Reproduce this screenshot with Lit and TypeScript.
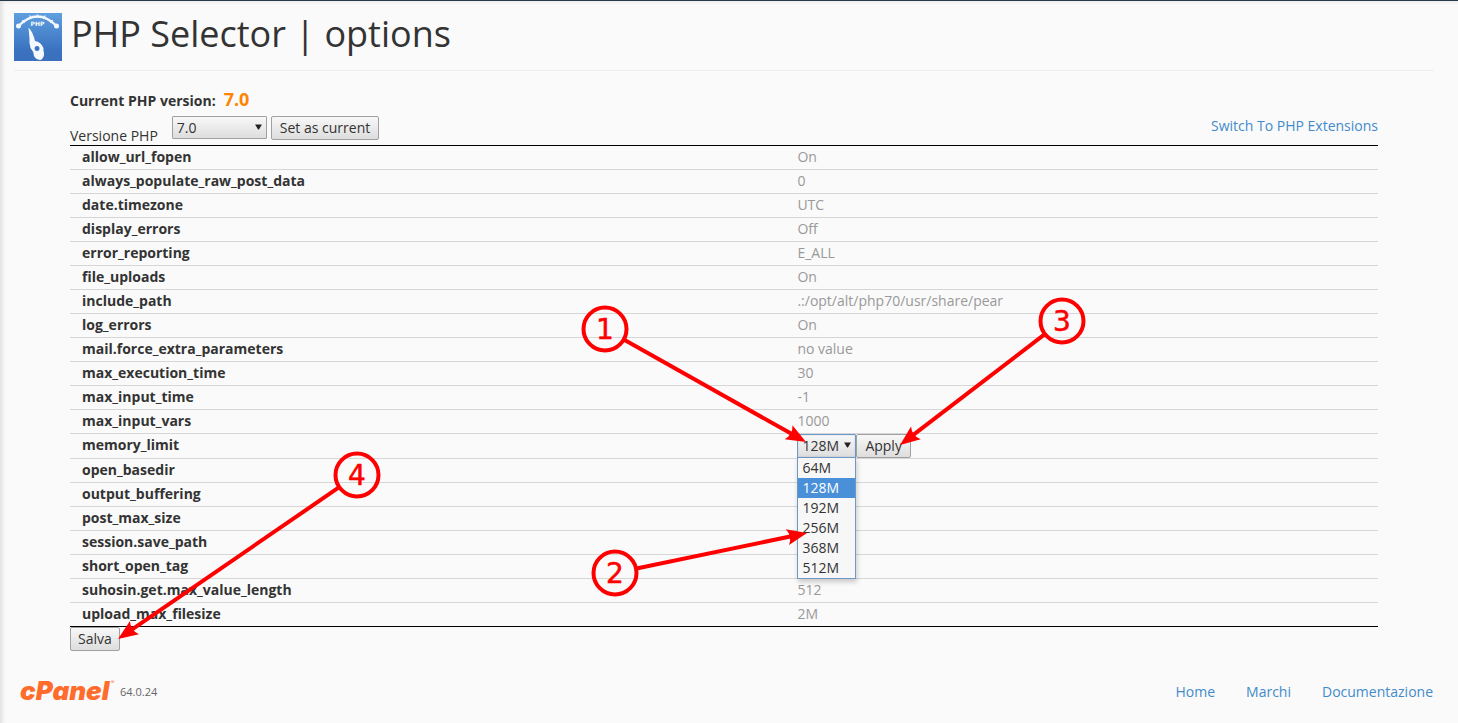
import { LitElement, html, svg, css } from "lit";
import { customElement, state } from "lit/decorators.js";

interface Option {
  name: string;
  value: string;
}

interface Callout {
  label: string;
  x: number;
  y: number;
  tipX: number;
  tipY: number;
}

const OPTIONS: Option[] = [
  { name: "allow_url_fopen", value: "On" },
  { name: "always_populate_raw_post_data", value: "0" },
  { name: "date.timezone", value: "UTC" },
  { name: "display_errors", value: "Off" },
  { name: "error_reporting", value: "E_ALL" },
  { name: "file_uploads", value: "On" },
  { name: "include_path", value: ".:/opt/alt/php70/usr/share/pear" },
  { name: "log_errors", value: "On" },
  { name: "mail.force_extra_parameters", value: "no value" },
  { name: "max_execution_time", value: "30" },
  { name: "max_input_time", value: "-1" },
  { name: "max_input_vars", value: "1000" },
  { name: "memory_limit", value: "128M" },
  { name: "open_basedir", value: "" },
  { name: "output_buffering", value: "" },
  { name: "post_max_size", value: "" },
  { name: "session.save_path", value: "" },
  { name: "short_open_tag", value: "" },
  { name: "suhosin.get.max_value_length", value: "512" },
  { name: "upload_max_filesize", value: "2M" },
];

const MEMORY = ["64M", "128M", "192M", "256M", "368M", "512M"];

const CALLOUTS: Callout[] = [
  { label: "1", x: 605, y: 329, tipX: 806, tipY: 442 },
  { label: "2", x: 615, y: 573, tipX: 807, tipY: 533 },
  { label: "3", x: 1062, y: 321, tipX: 900, tipY: 445 },
  { label: "4", x: 357, y: 475, tipX: 118, tipY: 639 },
];

@customElement("app-root")
export class AppRoot extends LitElement {
  @state() private memory = "128M";

  static styles = css`
    :host {
      display: block;
      position: relative;
      box-sizing: border-box;
      min-height: 100vh;
      overflow: hidden;
      border-top: 1px solid #293a4a;
      background: #fafafa;
      box-shadow: inset 4px 2px 4px -2px #dcdcdc;
      color: #333;
      font: 14px/20px "Open Sans", "Noto Sans", sans-serif;
    }
    * {
      box-sizing: border-box;
    }
    a {
      color: #428bca;
      text-decoration: none;
    }
    .header {
      display: flex;
      gap: 9px;
      margin: 0 24px 0 14px;
      padding: 12px 0 9px;
      border-bottom: 1px solid #eee;
    }
    .app-icon {
      width: 48px;
      height: 48px;
    }
    .title {
      margin: 0;
      font-size: 36px;
      font-weight: 400;
      line-height: 42px;
    }
    .content {
      margin: 0 80px 0 70px;
      padding-top: 18px;
    }
    .current {
      display: flex;
      align-items: baseline;
      gap: 8px;
      font-weight: 700;
    }
    .current-value {
      color: #ff8400;
      font-size: 18px;
    }
    .toolbar {
      display: flex;
      height: 34px;
      padding-top: 5px;
      align-items: flex-start;
      justify-content: space-between;
    }
    .picker {
      display: flex;
      align-items: flex-start;
      gap: 4px;
    }
    .picker-label {
      padding: 10px 10px 0 0;
    }
    .select {
      position: relative;
      display: inline-block;
      vertical-align: top;
    }
    .arrow {
      position: absolute;
      top: 8px;
      right: 5px;
      width: 7px;
      height: 6px;
      fill: #222;
      pointer-events: none;
    }
    select,
    button {
      margin: 0;
      border: 1px solid #a0a0a0;
      border-radius: 2px;
      background: linear-gradient(#f8f8f8, #dddddd);
      color: #333;
      font: inherit;
      line-height: 20px;
    }
    select {
      appearance: none;
      display: block;
      height: 23px;
      padding: 0 4px;
      border-radius: 1px;
    }
    button {
      height: 24px;
      padding: 0 7px;
      vertical-align: top;
    }
    .apply {
      padding: 0 8px;
    }
    .set {
      padding: 0 8px;
    }
    .version {
      width: 95px;
    }
    .memory {
      width: 59px;
      height: 24px;
      border: 1px solid #6f98c4;
      box-shadow: inset 0 0 1px #6f98c4;
    }
    .menu {
      position: absolute;
      z-index: 1;
      top: 23px;
      left: 0;
      width: 59px;
      margin: 0;
      padding: 0;
      border: 1px solid #6f98c4;
      background: #f7f7f7;
      box-shadow: 1px 3px 5px rgba(0, 0, 0, 0.2);
      color: #333;
      list-style: none;
    }
    .choice {
      padding: 0 4px;
      cursor: default;
    }
    .choice[aria-selected="true"] {
      background: #4a90d9;
      color: #fff;
    }
    .options {
      width: 100%;
      border-collapse: collapse;
      border-top: 1px solid #000;
      border-bottom: 1px solid #000;
      table-layout: fixed;
    }
    .name,
    .value {
      height: 24px;
      padding: 0 12px 2px;
    }
    .name {
      width: 55%;
      text-align: left;
      font-weight: 700;
    }
    .value {
      padding-left: 8px;
      color: #999;
    }
    .value.editing {
      padding-bottom: 0;
    }
    .row + .row {
      border-top: 1px solid #d6d6d6;
    }
    .control {
      display: flex;
    }
    .footer {
      display: flex;
      align-items: center;
      justify-content: space-between;
      margin-top: 25px;
      padding: 0 25px 0 20px;
    }
    .brand {
      display: flex;
      align-items: center;
      gap: 4px;
      color: #666;
      font-size: 11px;
    }
    .logo {
      width: 96px;
      height: 32px;
      overflow: visible;
      fill: #ff6c2c;
      font-family: "Inter", sans-serif;
    }
    .logo-name {
      font-size: 26px;
      font-style: italic;
      font-weight: 900;
    }
    .logo-mark {
      font-size: 5px;
    }
    .links {
      display: flex;
      gap: 31px;
    }
    .callouts {
      position: absolute;
      z-index: 2;
      top: -1px;
      left: 0;
      width: 1458px;
      height: 723px;
      pointer-events: none;
    }
    .callout {
      fill: none;
      stroke: #f00;
      stroke-width: 4px;
    }
    .head {
      fill: #f00;
    }
    .number {
      fill: #f00;
      stroke: #f00;
      stroke-width: 0.5px;
      font: 28px "DejaVu Sans", sans-serif;
      text-anchor: middle;
    }
  `;

  private arrow() {
    return html`<svg class="arrow" viewBox="0 0 8 7" aria-hidden="true">
      <path d="M0 0.5h8L4.5 6.5h-1z" />
    </svg>`;
  }

  private value(option: Option) {
    if (option.name !== "memory_limit") return option.value;
    return html`<div class="control">
      <div class="select">
        <select
          class="memory"
          aria-label="memory_limit"
          .value=${this.memory}
          @change=${(e: Event) => (this.memory = (e.target as HTMLSelectElement).value)}
        >
          ${MEMORY.map((m) => html`<option ?selected=${m === this.memory}>${m}</option>`)}
        </select>
        ${this.arrow()}
        <ul class="menu" role="listbox" aria-label="memory_limit">
          ${MEMORY.map(
            (m) => html`<li
              class="choice"
              role="option"
              aria-selected=${m === this.memory ? "true" : "false"}
              @click=${() => (this.memory = m)}
            >${m}</li>`
          )}
        </ul>
      </div>
      <button class="apply" type="button">Apply</button>
    </div>`;
  }

  private callout(c: Callout) {
    const dx = c.tipX - c.x;
    const dy = c.tipY - c.y;
    const length = Math.hypot(dx, dy);
    const angle = (Math.atan2(dy, dx) * 180) / Math.PI;
    return svg`
      <g transform="translate(${c.x} ${c.y})">
        <circle class="callout" r="21.500" />
        <text class="number" y="10">${c.label}</text>
        <g transform="rotate(${angle})">
          <path class="callout" d="M22 0H${length - 11}" />
          <path class="head" d="M${length} 0l-20 8q5-8 0-16z" />
        </g>
      </g>`;
  }

  render() {
    return html`
      <header class="header">
        <svg class="app-icon" viewBox="0 0 48 48" aria-hidden="true">
          <defs>
            <linearGradient id="sky" x2="0" y2="1">
              <stop offset="0" stop-color="#5f9fdf" />
              <stop offset="0.75" stop-color="#3b73c1" />
              <stop offset="1" stop-color="#3a70bc" />
            </linearGradient>
          </defs>
          <path fill="url(#sky)" d="M0 0h48v48H0z" />
          <path d="M4.500 13Q23.500 -6 42.500 13" fill="none" stroke="#f5f9fd" stroke-width="2.2" />
          <path d="M8.500 7l2 3M16 2.500l1 3M23.500 1.500v3M31 2.500l-1 3M38.500 7l-2 3" stroke="#f5f9fd" stroke-width="1.300" />
          <circle cx="4.500" cy="13" r="2.500" fill="#f5f9fd" />
          <circle cx="42.500" cy="13" r="2.500" fill="#f5f9fd" />
          <text x="23.500" y="13" fill="#f5f9fd" text-anchor="middle" font-family="DejaVu Sans" font-size="6" font-weight="700">PHP</text>
          <path
            fill="#f5f9fd"
            fill-rule="evenodd"
            d="M14.500 14.500Q19 19 21 28Q27 29 29.500 35Q29 37 30 40Q30.500 44 27 47Q22 47 20 43Q19.500 38 16.500 35Q15 30 15.500 26zM23 33a2.500 2.500 0 1 0 .1 0z"
          />
        </svg>
        <h1 class="title">PHP Selector | options</h1>
      </header>

      <main class="content">
        <div class="current">
          <span>Current PHP version:</span>
          <span class="current-value">7.0</span>
        </div>
        <div class="toolbar">
          <div class="picker">
            <label class="picker-label" for="version">Versione PHP</label>
            <div class="select">
              <select id="version" class="version">
                <option>7.0</option>
              </select>
              ${this.arrow()}
            </div>
            <button class="set" type="button">Set as current</button>
          </div>
          <a href="#extensions">Switch To PHP Extensions</a>
        </div>
        <table class="options">
          <tbody>
            ${OPTIONS.map(
              (o) => html`<tr class="row">
                <th class="name" scope="row">${o.name}</th>
                <td class=${o.name === "memory_limit" ? "value editing" : "value"}>${this.value(o)}</td>
              </tr>`
            )}
          </tbody>
        </table>
        <button type="button">Salva</button>
      </main>

      <footer class="footer">
        <div class="brand">
          <svg class="logo" viewBox="0 0 96 32" role="img" aria-label="cPanel">
            <text class="logo-name" x="0" y="24">cPanel</text>
            <text class="logo-mark" x="91" y="8">®</text>
          </svg>
          <span>64.0.24</span>
        </div>
        <nav class="links">
          <a href="#home">Home</a>
          <a href="#marchi">Marchi</a>
          <a href="#documentazione">Documentazione</a>
        </nav>
      </footer>

      <svg class="callouts" viewBox="0 0 1458 723">${CALLOUTS.map((c) => this.callout(c))}</svg>
    `;
  }
}
